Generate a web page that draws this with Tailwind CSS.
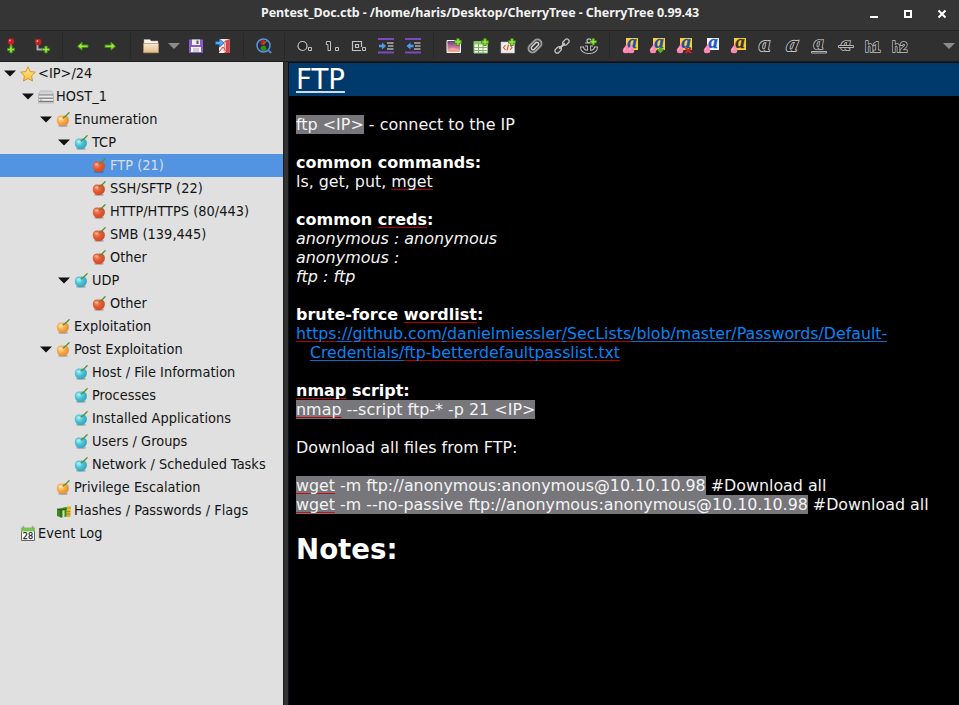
<!DOCTYPE html>
<html lang="en">
<head>
<meta charset="utf-8">
<title>Pentest_Doc.ctb</title>
<script src="https://cdn.jsdelivr.net/npm/@tailwindcss/browser@4"></script>
</head>
<body class="w-[959px] h-[705px] overflow-hidden bg-[#303030] flex flex-col">
<svg class="absolute w-0 h-0">
  <defs>
    <radialGradient id="gr" cx=".35" cy=".35" r=".75"><stop offset="0" stop-color="#f58a66"/><stop offset=".5" stop-color="#e4562e"/><stop offset="1" stop-color="#c84a24"/></radialGradient>
    <radialGradient id="go" cx=".35" cy=".35" r=".75"><stop offset="0" stop-color="#ffdc9a"/><stop offset=".5" stop-color="#f5a646"/><stop offset="1" stop-color="#d88a34"/></radialGradient>
    <radialGradient id="gc" cx=".35" cy=".35" r=".75"><stop offset="0" stop-color="#9aeaf2"/><stop offset=".5" stop-color="#45bdd2"/><stop offset="1" stop-color="#2fa0b8"/></radialGradient>
    <linearGradient id="gf" x1="0" y1="0" x2="0" y2="1"><stop offset="0" stop-color="#f7e6cc"/><stop offset="1" stop-color="#e3be8c"/></linearGradient>
    <linearGradient id="gi" x1="0" y1="0" x2="0" y2="1"><stop offset="0" stop-color="#5a3a70"/><stop offset=".5" stop-color="#c070a0"/><stop offset="1" stop-color="#f6c070"/></linearGradient>
    <linearGradient id="gs" x1="0" y1="0" x2="0" y2="1"><stop offset="0" stop-color="#ffe98a"/><stop offset="1" stop-color="#f8bf3c"/></linearGradient>
    <symbol id="plus" viewBox="0 0 8 8"><path d="M2.8.5h2.4v2.3h2.3v2.4H5.2v2.3H2.8V5.200H.5V2.800h2.300z" fill="#9be345" stroke="#3f8a10" stroke-width=".9"/></symbol>
    <symbol id="drop" viewBox="0 0 8 10"><path d="M4.500.3C4.800 3 7.500 4.500 7.300 7a3.200 2.800 0 0 1-6.500 0C.7 4.800 3.500 3.500 4.500.3z" fill="#ff86b0"/><path d="M2.500 6.200q.2-1.200 1.300-2" stroke="#ffd0e0" fill="none"/></symbol>
    <symbol id="la" viewBox="0 0 12 12"><text x="6" y="10.300" text-anchor="middle" font-family="Liberation Serif" font-weight="bold" font-style="italic" font-size="19" fill="currentColor" stroke="currentColor" stroke-width=".3">a</text></symbol>
    <symbol id="lo" viewBox="0 0 16 16"><text x="7.500" y="13" text-anchor="middle" font-family="Liberation Serif" font-weight="bold" font-style="italic" font-size="22" fill="#272727" stroke="#c4c4c4" stroke-width="1.800" paint-order="stroke">a</text></symbol>
    <symbol id="apple" viewBox="0 0 16 16"><ellipse cx="7" cy="13.700" rx="5" ry="1.300" fill="#000" opacity=".22"/><path d="M6.800 3.800C3.500 2.800.8 4.500.8 8c0 3.500 2.500 6 4.700 6h2.200c2.300 0 5.200-2.500 5.200-6 0-3.500-2.800-5.200-6.100-4.200z"/><ellipse cx="4.500" cy="6.300" rx="2" ry="1.400" fill="#fff" opacity=".3"/><path d="M6.800 6.200Q9.500 4.800 13.500.3" stroke="#5a8f32" stroke-width="1.300" fill="none"/></symbol>
  </defs>
</svg>

<header class="h-[30px] shrink-0 grid grid-cols-[1fr_auto] items-center bg-[#353535]">
  <h1 class="pl-[261px] -mt-[5px] leading-[20px] whitespace-nowrap text-[12.5px] tracking-[-0.08px] font-bold text-[#f2f2f2] font-['Noto_Sans',sans-serif]">Pentest_Doc.ctb - /home/haris/Desktop/CherryTree - CherryTree 0.99.43</h1>
  <div class="flex gap-[18px] pr-[9px]">
    <svg width="16" height="16" class="-mt-[5px]"><path d="M4 12h8" stroke="#fff" stroke-width="2"/></svg>
    <svg width="16" height="16" class="-mt-[5px]"><path d="M5 6h6v6h-6z" fill="none" stroke="#fff" stroke-width="2"/></svg>
    <svg width="16" height="16" class="-mt-[5px]"><path d="m4.500 5.500 7 7m0-7-7 7" stroke="#fff" stroke-width="2"/></svg>
  </div>
</header>

<nav class="h-[32px] shrink-0 flex items-center bg-[#303030] border-t border-[#222] pb-[1px] shadow-[inset_0_-1px_0_#1c1c1c]">
  <span class="w-[22px] flex justify-center shrink-0"><svg width="16" height="16"><path d="M8 3v8" stroke="#999" stroke-width="2"/><circle cx="8" cy="3.500" r="3.200" fill="#c81e1e"/><circle cx="7" cy="2.600" r="1" fill="#ff9a9a"/><use href="#plus" x="4" y="7.500" width="8" height="8"/></svg></span>
  <span class="w-[33.5px] pl-[12px] shrink-0"><svg width="16" height="16"><path d="M3.500 6v5.500H9" stroke="#aaa" stroke-width="2" fill="none"/><path d="M3 3 1 .5" stroke="#8a3a2a"/><circle cx="4.200" cy="4" r="3.200" fill="#c81e1e"/><circle cx="3.400" cy="3" r="1" fill="#ff9a9a"/><use href="#plus" x="8" y="7.500" width="8" height="8"/></svg></span>
  <i class="w-[14px] h-[26px] flex justify-center shrink-0"><b class="w-px bg-[#282828]"></b></i>
  <span class="w-[27px] flex justify-center shrink-0"><svg width="16" height="16"><path d="M13 7H7V4L2.500 8.200 7 12.200V9.500h6z" fill="#9be345" stroke="#3f8a10"/></svg></span>
  <span class="w-[27px] flex justify-center shrink-0"><svg width="16" height="16"><path d="M3 7h6V4l4.500 4.200L9 12.200V9.500H3z" fill="#9be345" stroke="#3f8a10"/></svg></span>
  <i class="w-[14px] h-[26px] flex justify-center shrink-0"><b class="w-px bg-[#282828]"></b></i>
  <span class="w-[27px] flex justify-center shrink-0"><svg width="16" height="16"><path d="M1 14V1.500h6L8 3h7v11z" fill="#f4f4f4" stroke="#aaa" stroke-width=".5"/><path d="M.5 5.500h15v9.300H.5z" fill="url(#gf)" stroke="#b08a58" stroke-width=".7"/></svg></span>
  <span class="w-[18px] flex justify-center shrink-0"><svg width="12" height="6"><path d="M0 0h12L6 6z" fill="#8c8c8c"/></svg></span>
  <span class="w-[27px] flex justify-center shrink-0"><svg width="16" height="16"><path d="M1 1.500h14v13.500H1z" fill="#8b5cc8"/><path d="M4 1.500h8v5.500H4z" fill="#eee"/><path d="M8.500 2.500h2v3.500h-2z" fill="#555"/><path d="M3 9h10v5H3z" fill="#f2f2f2"/><path d="M5 11h6M5 13h6" stroke="#999" stroke-width=".8"/></svg></span>
  <span class="w-[27px] flex justify-center shrink-0"><svg width="16" height="16"><path d="M4 1h10.500v14H4z" fill="#eee"/><path d="M9.500 3 14.500 1v14h-5z" fill="#d94545"/><path d="M10.500 4v10M4 6l6 8" stroke="#f8c0c0"/><path d="M4 14 8 9l4 5" stroke="#d94545" fill="none"/><path d="M.5 3.500h4V1l4.500 4-4.500 4V6.500h-4z" fill="#5aa4f0" stroke="#1f5eb0" stroke-width=".8"/></svg></span>
  <i class="w-[14px] h-[26px] flex justify-center shrink-0"><b class="w-px bg-[#282828]"></b></i>
  <span class="w-[27px] flex justify-center shrink-0"><svg width="16" height="16"><circle cx="7.500" cy="7.500" r="6.500" fill="#222c38" stroke="#5b94dc" stroke-width="1.500"/><path d="m12 12 3.300 3" stroke="#4b84d0" stroke-width="2.200"/><circle cx="7" cy="4.600" r="2.500" fill="#c81e1e"/><circle cx="7.500" cy="10.300" r="2.900" fill="#2f8a22"/><path d="M7 6l4-3" stroke="#5a9a3a"/></svg></span>
  <i class="w-[14px] h-[26px] flex justify-center shrink-0"><b class="w-px bg-[#282828]"></b></i>
  <span class="w-[27px] flex justify-center shrink-0"><svg width="16" height="16" fill="none" stroke="#c4c4c4"><circle cx="5.500" cy="8" r="4.500" stroke-width="1.200" fill="#272727"/><path d="M11.500 9.500h3v3h-3z"/></svg></span>
  <span class="w-[27px] flex justify-center shrink-0"><svg width="16" height="16" fill="none" stroke="#c4c4c4"><path d="M2.500 3.500h4v9h-2.500v-6H2.200z" fill="#272727"/><path d="M11.500 9.500h3v3h-3z"/></svg></span>
  <span class="w-[27px] flex justify-center shrink-0"><svg width="16" height="16" fill="none" stroke="#c4c4c4"><path d="M10 12.500H1.500v-9h9V9M4.500 6.500h3v3h-3z" stroke-width="1.200"/><path d="M11.500 9.500h3v3h-3z"/></svg></span>
  <span class="w-[27px] flex justify-center shrink-0"><svg width="16" height="16"><path d="M0 1h16M0 14.500h16" stroke="#8048c0" stroke-width="2"/><path d="M9 5h6.500M10 8h5.500M9 11h6.500" stroke="#eee" stroke-width="1.200"/><path d="M1 6.800h3V4.500L8 8 4 11.500V9.200H1z" fill="#4c9af0"/></svg></span>
  <span class="w-[27px] flex justify-center shrink-0"><svg width="16" height="16"><path d="M0 1h16M0 14.500h16" stroke="#8048c0" stroke-width="2"/><path d="M9 5h6.500M10 8h5.500M9 11h6.500" stroke="#eee" stroke-width="1.200"/><path d="M8.500 6.800h-3V4.500L1.500 8l4 3.500V9.200h3z" fill="#4c9af0"/></svg></span>
  <i class="w-[14px] h-[26px] flex justify-center shrink-0"><b class="w-px bg-[#282828]"></b></i>
  <span class="w-[27px] flex justify-center shrink-0"><svg width="16" height="16"><path d="M1 2.500h13.500v12H1z" fill="url(#gi)" stroke="#f4f4f4"/><path d="M2 12q4-5 12 1" fill="#f0a0b8"/><use href="#plus" x="8" y="0" width="8" height="8"/></svg></span>
  <span class="w-[27px] flex justify-center shrink-0"><svg width="16" height="16"><path d="M1 3.500h13.500V15H1z" fill="#f4f4f4" stroke="#8cc070"/><path d="M1 4h13v2.500H1z" fill="#8cd060"/><path d="M5.500 4v11M10 4v11M1 9.500h13M1 12.500h13" stroke="#7cb860" stroke-width="1"/><use href="#plus" x="8" y="0" width="8" height="8"/></svg></span>
  <span class="w-[27px] flex justify-center shrink-0"><svg width="16" height="16"><path d="M1 4h13.500v11H1z" fill="#f0f0f0" stroke="#bbb" stroke-width=".6"/><path d="M5.500 7 3.500 9.500l2 2.500M10 7l2 2.500-2 2.500M8.500 6.500l-1.500 6" stroke="#e0582a" fill="none" stroke-width="1.200"/><use href="#plus" x="8" y="0" width="8" height="8"/></svg></span>
  <span class="w-[27px] flex justify-center shrink-0"><svg width="16" height="16"><g transform="rotate(-45 8 8)" fill="none"><rect x="0.500" y="4" width="15" height="8" rx="4" stroke="#9a9a9a" stroke-width="2"/><rect x="3.500" y="6.300" width="9" height="3.400" rx="1.700" stroke="#d4d4d4" stroke-width="1.500"/></g></svg></span>
  <span class="w-[27px] flex justify-center shrink-0"><svg width="16" height="16"><g transform="rotate(-45 8 8)" fill="none" stroke="#c4c4c4" stroke-width="1.300"><rect x="-1" y="5.800" width="7" height="4.500" rx="2.200"/><rect x="10" y="5.800" width="7" height="4.500" rx="2.200"/><path d="M4 8h8" stroke-width="2"/></g></svg></span>
  <span class="w-[27px] flex justify-center shrink-0"><svg width="16" height="16" class="overflow-visible"><path d="M8 5v9M4 6.500h8M1 8.500q0 5.500 7 5.500t7-5.500" stroke="#c4c4c4" stroke-width="4" fill="none"/><circle cx="8" cy="2.800" r="2" fill="none" stroke="#c4c4c4" stroke-width="1.200"/><path d="M8 5.500v8.500M3.500 6.500h9M1 9.500q.5 4.500 7 4.500t7-4.500" stroke="#282828" stroke-width="2.200" fill="none"/><use href="#plus" x="8.500" y="0" width="7.500" height="7.500"/></svg></span>
  <i class="w-[14px] h-[26px] flex justify-center shrink-0"><b class="w-px bg-[#282828]"></b></i>
  <span class="w-[27px] flex justify-center shrink-0"><svg width="16" height="16"><path d="M4 0h12v12H4z" fill="#fbcf35"/><use href="#la" x="4" y="0" width="12" height="12" color="#1c4fae"/><use href="#drop" x="0" y="5.500" width="8" height="10"/><use href="#drop" x="5" y="5.500" width="8" height="10"/></svg></span>
  <span class="w-[27px] flex justify-center shrink-0"><svg width="16" height="16"><path d="M4 0h12v12H4z" fill="#fbcf35"/><use href="#la" x="4" y="0" width="12" height="12" color="#1c4fae"/><use href="#drop" x="0" y="5.500" width="8" height="10"/><path d="M7.500 11h2.500V9.500h3V11h2.500l-4 4.500z" fill="#52ad2b"/></svg></span>
  <span class="w-[27px] flex justify-center shrink-0"><svg width="16" height="16"><path d="M4 0h12v12H4z" fill="#fbcf35"/><use href="#la" x="4" y="0" width="12" height="12" color="#1c4fae"/><use href="#drop" x="0" y="5.500" width="8" height="10"/><path d="m9.500 10 5.500 5m0-5-5.500 5" stroke="#c0282c" stroke-width="2.200"/></svg></span>
  <span class="w-[27px] flex justify-center shrink-0"><svg width="16" height="16"><path d="M4 0h12v12H4z" fill="#f4f6fa"/><use href="#la" x="4" y="0" width="12" height="12" color="#1c58cc"/><use href="#drop" x="0" y="5.500" width="8" height="10"/></svg></span>
  <span class="w-[27px] flex justify-center shrink-0"><svg width="16" height="16"><path d="M4 0h12v12H4z" fill="#fbcf35"/><use href="#la" x="4" y="0" width="12" height="12" color="#38352c"/><use href="#drop" x="0" y="5.500" width="8" height="10"/></svg></span>
  <span class="w-[27px] flex justify-center shrink-0"><svg width="16" height="16"><use href="#lo" width="16" height="16"/></svg></span>
  <span class="w-[27px] flex justify-center shrink-0"><svg width="16" height="16"><use href="#lo" width="16" height="16" transform="translate(2.500 0) skewX(-12)"/></svg></span>
  <span class="w-[27px] flex justify-center shrink-0"><svg width="16" height="16"><use href="#lo" x="1" y="0" width="14" height="14"/><path d="M.5 13.500h15v1.500H.5z" fill="#262626" stroke="#c4c4c4" stroke-width=".9"/></svg></span>
  <span class="w-[27px] flex justify-center shrink-0"><svg width="16" height="16"><use href="#lo" x="1" y="1" width="14" height="14"/><path d="M.5 7.500h15v2H.5z" fill="#262626" stroke="#c4c4c4" stroke-width=".9"/></svg></span>
  <span class="w-[27px] flex justify-center shrink-0"><svg width="16" height="16" class="overflow-visible"><text x="0" y="13.500" textLength="15.500" lengthAdjust="spacingAndGlyphs" font-family="Liberation Sans" font-weight="bold" font-size="15.500" fill="#272727" stroke="#c4c4c4" stroke-width="1.600" paint-order="stroke">h1</text></svg></span>
  <span class="w-[27px] flex justify-center shrink-0"><svg width="16" height="16" class="overflow-visible"><text x="0" y="13.500" textLength="15.500" lengthAdjust="spacingAndGlyphs" font-family="Liberation Sans" font-weight="bold" font-size="15.500" fill="#272727" stroke="#c4c4c4" stroke-width="1.600" paint-order="stroke">h2</text></svg></span>
  <span class="ml-auto mr-[4px]"><svg width="12" height="6"><path d="M0 0h12L6 6z" fill="#8c8c8c"/></svg></span>
</nav>

<main class="flex-1 min-h-0 flex">
  <aside id="tree" class="w-[283px] shrink-0 bg-[#e0e0e0] text-[#141414] text-[14.4px] tracking-[0.03px] font-['DejaVu_Sans_Condensed','DejaVu_Sans',sans-serif] [font-stretch:condensed]"></aside>
  <div class="w-[6px] shrink-0 bg-[#323232] border-l border-r border-l-[#1c1c1c] border-r-[#08101a]"></div>
  <section class="flex-1 min-w-0 bg-black text-[#f4f4f4] text-[15.95px] leading-[19px] font-['DejaVu_Sans',sans-serif] border-t border-[#101010] [text-decoration-skip-ink:none] [&_p]:whitespace-pre">
    <h2 class="h-[33px] pl-[7px] bg-[#003a6c] text-white text-[27.65px] leading-[33px] underline decoration-[#d0dce8] decoration-[1.500px] underline-offset-[2px]">FTP</h2>
    <div class="pl-[7px] pt-[19px]">
      <p class="h-[38px]"><span class="bg-[#77767b]">ftp &lt;IP&gt;</span> - connect to the IP</p>
      <p class="font-bold text-white text-[16px]">common commands:</p>
      <p class="h-[38px] text-[15.85px]">ls, get, put, <u class="decoration-[#b00000] decoration-1 underline-offset-[2px]">mget</u></p>
      <p class="font-bold text-white text-[16px]">common <u class="decoration-[#b00000] decoration-1 underline-offset-[2px]">creds</u>:</p>
      <p class="italic">anonymous : anonymous</p>
      <p class="italic">anonymous :</p>
      <p class="italic h-[38px]">ftp : ftp</p>
      <p class="font-bold text-white text-[16px]">brute-force <u class="decoration-[#b00000] decoration-1 underline-offset-[2px]">wordlist</u>:</p>
      <p class="text-[#0a84f5] text-[15.78px]"><u class="decoration-[#b00000] decoration-1 underline-offset-[2px]">https</u><u class="decoration-[#0a6cc8] decoration-1 underline-offset-[2px]">://</u><u class="decoration-[#b00000] decoration-1 underline-offset-[2px]">github.com</u><u class="decoration-[#0a6cc8] decoration-1 underline-offset-[2px]">/</u><u class="decoration-[#b00000] decoration-1 underline-offset-[2px]">danielmiessler</u><u class="decoration-[#0a6cc8] decoration-1 underline-offset-[2px]">/</u><u class="decoration-[#b00000] decoration-1 underline-offset-[2px]">SecLists</u><u class="decoration-[#0a6cc8] decoration-1 underline-offset-[2px]">/blob/master/Passwords/Default-</u></p>
      <p class="text-[#0a84f5] text-[15.71px] pl-[14px] h-[38px]"><u class="decoration-[#0a6cc8] decoration-1 underline-offset-[2px]">Credentials/</u><u class="decoration-[#b00000] decoration-1 underline-offset-[2px]">ftp-betterdefaultpasslist.txt</u></p>
      <p class="font-bold text-white text-[16px]"><u class="decoration-[#b00000] decoration-1 underline-offset-[2px]">nmap</u> script:</p>
      <p class="h-[38px]"><span class="bg-[#77767b]"><u class="decoration-[#b00000] decoration-1 underline-offset-[2px]">nmap</u> --script ftp-* -p 21 &lt;IP&gt;</span></p>
      <p class="h-[38px]">Download all files from FTP:</p>
      <p class="text-[15.86px]"><span class="bg-[#77767b]"><u class="decoration-[#c01010] decoration-1 underline-offset-[2px]">wget</u> -m ftp://anonymous:anonymous@10.10.10.98</span> #Download all</p>
      <p class="h-[38px] text-[15.86px]"><span class="bg-[#77767b]"><u class="decoration-[#c01010] decoration-1 underline-offset-[2px]">wget</u> -m --no-passive ftp://anonymous:anonymous@10.10.10.98</span> #Download all</p>
      <h3 class="text-[27.65px] leading-[33px] font-bold text-white">Notes:</h3>
    </div>
  </section>
</main>
<script>
const apple = g => `<svg width="16" height="16" fill="url(#${g})"><use href="#apple" width="16" height="16"/></svg>`;
const icons = {
  r: apple('gr'), o: apple('go'), c: apple('gc'),
  star: '<svg width="16" height="16"><path d="M8 .8l2.200 4.700 5.200.7-3.800 3.600.9 5.200L8 12.500 3.500 15l.9-5.200L.6 6.200l5.200-.7z" fill="url(#gs)" stroke="#d08c28" stroke-width=".9" stroke-linejoin="round"/></svg>',
  host: '<svg width="16" height="16"><path d="M2.500 2h11L15.500 5v9h-15V5z" fill="#d4d4d4" stroke="#aaa" stroke-width=".7"/><path d="M1 6h14M1 9.200h14M1 12.500h14" stroke="#777" stroke-width="1.100"/><path d="M1 7.300h14M1 10.600h14" stroke="#f2f2f2"/><path d="M2 11h2" stroke="#6fc060"/></svg>',
  cash: '<svg width="16" height="16"><path d="M1 6l9-2 4 2v7L5 14.500 1 13z" fill="#3f8a1c"/><path d="M1 6l4 1v7.500M5 7l9-1" stroke="#255c0c" fill="none"/><path d="M6.500 7.500l2-.3v7l-2 .3z" fill="#d8dcc8"/><path d="M10.500 6h4v8h-4z" fill="#d8b428"/><path d="M11 3h4v4h-4z" fill="#e8cc40"/><path d="M10.500 8.500h4M10.500 11h4M11 5h4" stroke="#9a7c10" stroke-width=".7"/></svg>',
  cal: '<svg width="16" height="16"><path d="M1.500 2.500h13v12h-13z" fill="#fafafa" stroke="#666"/><path d="M1 1.500h14v4H1z" fill="#7cc455"/><path d="M3.500 0v3M12.500 0v3" stroke="#999" stroke-width="1.500"/><text x="8" y="13.200" text-anchor="middle" font-family="DejaVu Sans" font-size="9" fill="#222" stroke="#222" stroke-width=".25">28</text></svg>'
};
const rows = [[0,1,'star','<IP>/24'],[1,1,'host','HOST_1'],[2,1,'o','Enumeration'],[3,1,'c','TCP'],[4,0,'r','FTP (21)'],[4,0,'r','SSH/SFTP (22)'],[4,0,'r','HTTP/HTTPS (80/443)'],[4,0,'r','SMB (139,445)'],[4,0,'r','Other'],[3,1,'c','UDP'],[4,0,'r','Other'],[2,0,'o','Exploitation'],[2,1,'o','Post Exploitation'],[3,0,'c','Host / File Information'],[3,0,'c','Processes'],[3,0,'c','Installed Applications'],[3,0,'c','Users / Groups'],[3,0,'c','Network / Scheduled Tasks'],[2,0,'o','Privilege Escalation'],[2,0,'cash','Hashes / Passwords / Flags'],[0,0,'cal','Event Log']];
document.getElementById('tree').innerHTML = rows.map(([l,e,i,t],n) =>
  `<div class="h-[23px] flex items-center whitespace-nowrap ${n===4?'bg-[#5294e2] text-[#d8dfe8]':''}" style="padding-left:${l*18+4}px"><span class="w-[16px] shrink-0">${e?'<svg width="12" height="7"><path d="M0 .5h12L6 6.500z" fill="#111"/></svg>':''}</span><span class="w-[18px] shrink-0">${icons[i]}</span><span>${t.replace(/</g,'&lt;')}</span></div>`).join('');
</script>
</body>
</html>
